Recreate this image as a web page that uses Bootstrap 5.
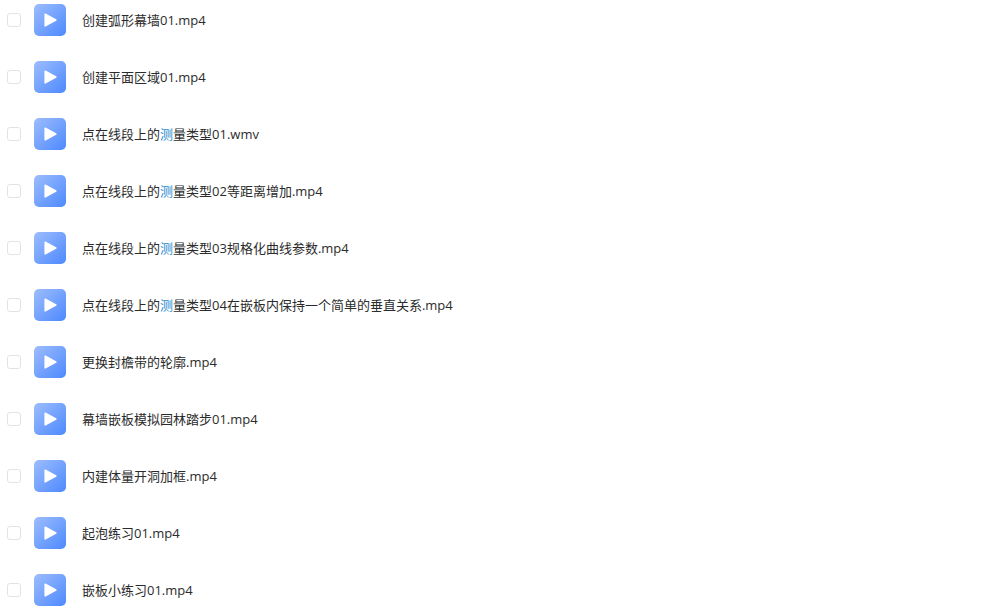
<!DOCTYPE html>
<html lang="zh">
<head>
    <meta charset="UTF-8">
    <meta name="viewport" content="width=device-width, initial-scale=1.0">
    <link href="https://cdn.jsdelivr.net/npm/bootstrap@5.3.2/dist/css/bootstrap.min.css" rel="stylesheet">
    <title>视频列表</title>
    <style>
        html, body {
            height: 100%;
            overflow: hidden;
        }
        body {
            background-color: #ffffff;
            color: #2b2b2b;
            font-family: "Open Sans", "Noto Sans CJK SC", sans-serif;
            font-size: 13px;
        }
        .file-list {
            gap: 25px;
            padding: 4px 0 0 7px;
        }
        .file-row {
            height: 32px;
        }
        .file-check {
            width: 14px;
            height: 14px;
            border: 1px solid #e3e3e3;
            border-radius: 3px;
            margin-right: 13px;
            background-color: #ffffff;
        }
        .file-thumb {
            width: 32px;
            height: 32px;
            border-radius: 5px;
            background: linear-gradient(135deg, #9dbdfd, #4d89fe);
            margin-right: 16px;
        }
        .file-name {
            padding-top: 1px;
        }
        .hit {
            color: #1f8cd0;
        }
    </style>
</head>
<body>
<div id="fileList" class="file-list d-flex flex-column"></div>

<script src="https://cdn.jsdelivr.net/npm/bootstrap@5.3.2/dist/js/bootstrap.bundle.min.js"></script>
<script>
    const files = [
        '创建弧形幕墙01.mp4',
        '创建平面区域01.mp4',
        '点在线段上的<span class="hit">测</span>量类型01.wmv',
        '点在线段上的<span class="hit">测</span>量类型02等距离增加.mp4',
        '点在线段上的<span class="hit">测</span>量类型03规格化曲线参数.mp4',
        '点在线段上的<span class="hit">测</span>量类型04在嵌板内保持一个简单的垂直关系.mp4',
        '更换封檐带的轮廓.mp4',
        '幕墙嵌板模拟园林踏步01.mp4',
        '内建体量开洞加框.mp4',
        '起泡练习01.mp4',
        '嵌板小练习01.mp4'
    ];

    const list = document.getElementById('fileList');
    files.forEach(name => {
        const row = document.createElement('div');
        row.className = 'file-row d-flex align-items-center flex-shrink-0';
        row.innerHTML = `
            <div class="file-check flex-shrink-0"></div>
            <div class="file-thumb d-flex align-items-center justify-content-center flex-shrink-0">
                <svg width="13" height="14" viewBox="0 0 13 14"><path d="M1.2 1.2 L11.8 7 L1.2 12.8 Z" fill="#fff" stroke="#fff" stroke-width="1.6" stroke-linejoin="round"/></svg>
            </div>
            <div class="file-name">${name}</div>
        `;
        list.appendChild(row);
    });
</script>
</body>
</html>
